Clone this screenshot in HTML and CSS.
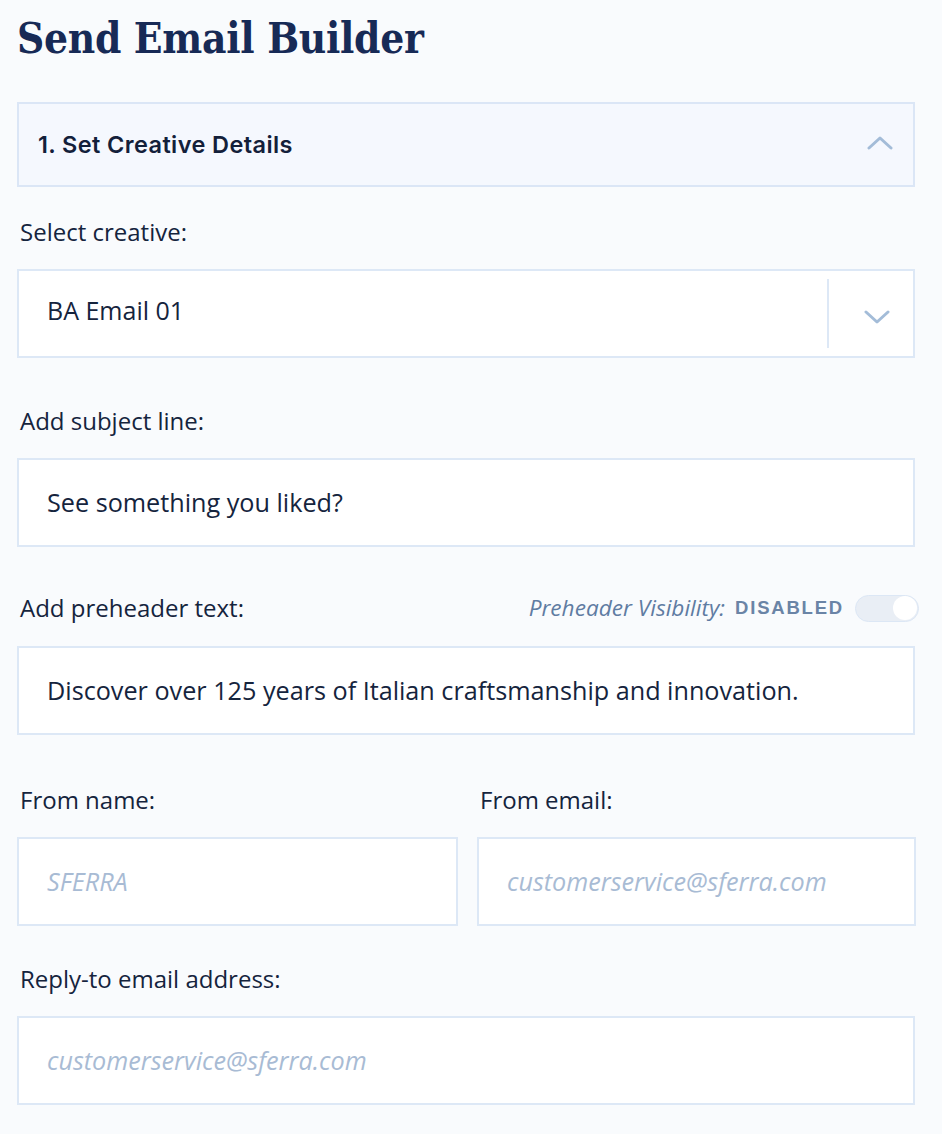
FILE: index.html
```html
<!DOCTYPE html>
<html>
<head>
<meta charset="utf-8">
<link rel="stylesheet" href="styles.css">
</head>
<body>
<div class="page">
  <h1 class="title">Send Email Builder</h1>
  <div class="accordion">
    <span class="acc-title">1. Set Creative Details</span>
    <svg class="acc-chev" width="26" height="16" viewBox="0 0 26 16"><path d="M2 13 L13 3 L24 13" fill="none" stroke="#a3bcd8" stroke-width="3" stroke-linecap="round" stroke-linejoin="round"/></svg>
  </div>

  <div class="label l-first">Select creative:</div>
  <div class="select">
    <div class="select-value">BA Email 01</div>
    <div class="select-div"></div>
    <div class="select-btn">
      <svg width="26" height="16" viewBox="0 0 26 16"><path d="M2 3 L13 13 L24 3" fill="none" stroke="#a3bcd8" stroke-width="3" stroke-linecap="round" stroke-linejoin="round"/></svg>
    </div>
  </div>

  <div class="label l-subject">Add subject line:</div>
  <div class="input">See something you liked?</div>

  <div class="label-row l-pre">
    <div class="label-inline">Add preheader text:</div>
    <div class="vis">
      <span class="vis-label">Preheader Visibility:</span>
      <span class="vis-state">DISABLED</span>
      <span class="toggle"><span class="knob"></span></span>
    </div>
  </div>
  <div class="input">Discover over 125 years of Italian craftsmanship and innovation.</div>

  <div class="two-col l-from">
    <div class="col">
      <div class="label-inline">From name:</div>
      <div class="input placeholder">SFERRA</div>
    </div>
    <div class="col">
      <div class="label-inline">From email:</div>
      <div class="input placeholder">customerservice@sferra.com</div>
    </div>
  </div>

  <div class="label l-reply">Reply-to email address:</div>
  <div class="input placeholder">customerservice@sferra.com</div>
</div>
</body>
</html>
```

FILE: styles.css
```css
html, body {
  margin: 0;
  padding: 0;
  background: #f9fbfd;
}
body {
  font-family: "Open Sans", "DejaVu Sans", sans-serif;
  color: #15243d;
}
.page {
  width: 898px;
  padding: 0 27px 0 17px;
}
.title {
  margin: 0;
  padding-top: 13px;
  height: 102px;
  box-sizing: border-box;
  font-family: "DejaVu Serif Condensed", "DejaVu Serif", serif;
  font-weight: 700;
  font-size: 42px;
  line-height: 52px;
  color: #172a56;
  letter-spacing: -0.3px;
}
.accordion {
  height: 85px;
  box-sizing: border-box;
  border: 2px solid #dbe6f6;
  background: #f5f8fe;
  display: flex;
  align-items: center;
  justify-content: space-between;
  padding: 0 20px 0 19px;
}
.acc-title {
  font-family: "Inter", "Roboto", sans-serif;
  font-weight: 600;
  font-size: 23.5px;
  color: #13203a;
  letter-spacing: 0.4px;
}
.acc-chev {
  margin-top: -4px;
}
.label, .label-inline {
  font-size: 24px;
  line-height: 30px;
  height: 30px;
  color: #15243d;
}
.label {
  padding-left: 3px;
  margin-bottom: 22px;
}
.l-first { margin-top: 30px; }
.l-subject { margin-top: 48px; }
.l-pre { margin-top: 46px; }
.l-reply { margin-top: 38px; }
.select, .input {
  height: 89px;
  box-sizing: border-box;
  background: #fff;
  border: 2px solid #dde8f6;
}
.select {
  display: flex;
  align-items: stretch;
}
.select-value {
  flex: 1;
  display: flex;
  align-items: center;
  padding-left: 28px;
  font-size: 25px;
  padding-bottom: 8px;
}
.select-div {
  width: 2px;
  background: #dde8f6;
  margin: 8px 0;
}
.select-btn {
  width: 84px;
  box-sizing: border-box;
  display: flex;
  align-items: center;
  justify-content: center;
  padding-top: 6px;
  padding-left: 12px;
}
.input {
  display: flex;
  align-items: center;
  padding-left: 28px;
  padding-bottom: 2px;
  font-size: 25.2px;
}
.placeholder {
  color: #a8bbd4;
  font-style: italic;
}
.label-row {
  display: flex;
  justify-content: space-between;
  align-items: center;
  height: 30px;
  padding-left: 3px;
  margin-right: -4px;
  margin-bottom: 23px;
}
.vis {
  display: flex;
  align-items: center;
  height: 30px;
}
.vis-label {
  font-style: italic;
  font-size: 22.6px;
  line-height: 30px;
  color: #5f7ca2;
  margin-right: 10px;
}
.vis-state {
  font-family: "Liberation Sans", "Arial", sans-serif;
  font-weight: 700;
  font-size: 18.5px;
  line-height: 30px;
  letter-spacing: 1.8px;
  color: #6a84a6;
  margin-right: 11px;
}
.toggle {
  width: 64px;
  height: 27px;
  box-sizing: border-box;
  border-radius: 14px;
  background: #e9eef5;
  border: 1.5px solid #dce7f5;
  display: flex;
  align-items: center;
  justify-content: flex-end;
  padding-right: 1px;
}
.knob {
  width: 24px;
  height: 24px;
  border-radius: 50%;
  background: #fff;
}
.two-col {
  display: grid;
  grid-template-columns: 441px 439px;
  column-gap: 19px;
}
.l-from { margin-top: 50px; }
.col .label-inline {
  padding-left: 3px;
  margin-bottom: 22px;
}
```
